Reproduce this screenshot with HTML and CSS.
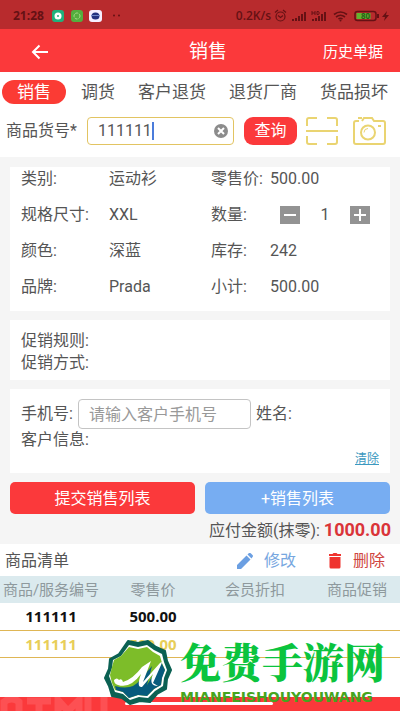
FILE: index.html
```html
<!DOCTYPE html>
<html lang="zh-CN">

<head>
  <title>销售</title>
  <meta charset="utf-8" />
  <meta name="viewport" content="width=device-width, initial-scale=1" />
  <link rel="stylesheet" href="styles.css">
</head>

<body>
<div class="status">
  <span class="clock">21:28</span>
  <svg class="apps" width="72" height="14" viewBox="0 0 72 14">
    <rect x="0" y="1" width="12" height="12" rx="3" fill="#20b17c"/>
    <circle cx="6" cy="7" r="3.5" fill="#fff"/><circle cx="6" cy="7" r="1" fill="#20b17c"/>
    <rect x="19" y="1" width="12" height="12" rx="3" fill="#54ae3e"/>
    <circle cx="25" cy="7" r="3" fill="none" stroke="#a9dc8c" stroke-dasharray="3 1"/>
    <rect x="37" y="1" width="13" height="12" rx="3" fill="#f5efff"/>
    <ellipse cx="43.500" cy="7" rx="4" ry="3.500" fill="#24317f"/><path d="M39 6.500h9" stroke="#7184c5"/>
    <circle cx="62" cy="6.500" r="1" fill="#651114"/><circle cx="67" cy="6.500" r="1" fill="#651114"/>
  </svg>
  <span class="speed">0.2K/s</span>
  <svg width="116" height="16" viewBox="0 0 116 16" fill="none" stroke="#651114">
    <circle cx="6.500" cy="8.500" r="4.500" stroke-width="1.200"/>
    <path d="M4 7.500l2.500 2 2.500-2M1 4.500l3-2.500M12 4.500L9 2" stroke-width="1.200"/>
    <path d="M19 13v-2M22 13v-3M25 13V8M28 13V6M31 13V4" stroke-width="2"/>
    <path d="M39 13v-2M42 13v-3M45 13V8M48 13V6M51 13V4" stroke-width="2"/>
    <path d="M38 3v4M41 3v4M38 5h3M43 3.500v3h1.500q1.500-1.500 0-3z" stroke-width="1"/>
    <path d="M60 6.500q6.500-5 13 0M62 9q4.500-3.500 9 0M64.500 11q2-1.500 4 0" stroke-width="1.600"/>
    <circle cx="66.500" cy="12.500" r="1" fill="#651114" stroke="none"/>
    <rect x="81" y="3.500" width="21" height="9" rx="2.500" stroke-width="1.500"/>
    <rect x="82.500" y="5" width="14" height="6" fill="#62b52f" stroke="none"/>
    <path d="M104 6v4" stroke-width="2"/>
    <path d="M113 3l-5 6h3l-1 4 5-6h-3z" fill="#651114" stroke="none"/>
    <text x="87" y="11" class="battery">80</text>
  </svg>
</div>

<header class="header">
  <button type="button" class="back" aria-label="返回">
    <svg width="18" height="16" viewBox="0 0 18 16" fill="none" stroke="#fff" stroke-width="2"><path d="M17 8H2M8.500 1.500L2 8l6.500 6.500"/></svg>
  </button>
  <h1>销售</h1>
  <a href="#history" class="history">历史单据</a>
</header>

<nav class="tabs">
  <a href="#sale" class="active">销售</a>
  <a href="#transfer">调货</a>
  <a href="#return">客户退货</a>
  <a href="#vendor">退货厂商</a>
  <a href="#damage">货品损坏</a>
</nav>

<form class="search">
  <label for="goods_no">商品货号*</label>
  <div class="search-box">
    <input type="text" id="goods_no" value="111111" />
    <span class="caret"></span>
    <button type="reset" class="clear-input" aria-label="清空">
      <svg width="14" height="14" viewBox="0 0 14 14"><circle cx="7" cy="7" r="7" fill="#8c8c8c"/><path d="M4 4l6 6M10 4l-6 6" stroke="#fff" stroke-width="2"/></svg>
    </button>
  </div>
  <button type="button" class="query">查询</button>
  <button type="button" class="icon" aria-label="扫码">
    <svg width="32" height="28" viewBox="0 0 32 28" fill="none" stroke="#ead471" stroke-width="2"><path d="M1 9V3q0-2 2-2h8M21 1h8q2 0 2 2v6M1 19v6q0 2 2 2h8M21 27h8q2 0 2-2v-6M0 14h32"/></svg>
  </button>
  <button type="button" class="icon" aria-label="拍照">
    <svg width="34" height="28" viewBox="0 0 34 28" fill="none" stroke="#ead471" stroke-width="2"><path d="M6 4H3Q1 4 1 6v19q0 2 2 2h27q2 0 2-2V6q0-2-2-2h-9l-2-3h-8L9 4M5 1h4M25 9h3"/><circle cx="15" cy="15.500" r="7"/><path d="M11 15.500q0-4 4-4" stroke-width="1"/></svg>
  </button>
</form>

<main class="content">
  <section class="card goods">
    <span>类别:</span><span>运动衫</span><span>零售价:</span><span>500.00</span>
    <span>规格尺寸:</span><span>XXL</span><span>数量:</span>
    <span class="stepper">
      <button type="button" aria-label="减少"><svg width="20" height="18" viewBox="0 0 20 18"><path d="M4 9h12" stroke="#fff" stroke-width="2"/></svg></button>
      <output>1</output>
      <button type="button" aria-label="增加"><svg width="20" height="18" viewBox="0 0 20 18"><path d="M4 9h12M10 3v12" stroke="#fff" stroke-width="2"/></svg></button>
    </span>
    <span>颜色:</span><span>深蓝</span><span>库存:</span><span>242</span>
    <span>品牌:</span><span>Prada</span><span>小计:</span><span>500.00</span>
  </section>

  <section class="card promo">
    <p>促销规则:</p>
    <p>促销方式:</p>
  </section>

  <section class="card customer">
    <div class="phone-row">
      <label for="phone">手机号:</label>
      <input type="text" id="phone" placeholder="请输入客户手机号" />
      <span>姓名:</span>
    </div>
    <p>客户信息:</p>
    <a href="#clear" class="clear">清除</a>
  </section>

  <div class="actions">
    <button type="button" class="submit">提交销售列表</button>
    <button type="button" class="add">+销售列表</button>
  </div>
  <p class="total">应付金额(抹零): <b>1000.00</b></p>
</main>

<div class="list-head">
  <h2>商品清单</h2>
  <button type="button" class="edit">
    <svg width="16" height="16" viewBox="0 0 16 16" fill="#6b9fe2"><path d="M0 16v-4L9.500 2.500l4 4L4 16zM10.500 1.500L12 0q1-.5 2 .5L15.500 2q1 1 0 2L14.500 5.500z"/></svg>
    修改
  </button>
  <button type="button" class="delete">
    <svg width="14" height="16" viewBox="0 0 14 16" fill="#ef342f"><path d="M1 1h3.500l1-1h3l1 1H13v2H1zM1.500 4h11v10q0 1.500-1.500 1.500H3Q1.500 15.500 1.500 14z"/></svg>
    删除
  </button>
</div>

<div class="list">
  <table>
    <thead>
      <tr><th>商品/服务编号</th><th>零售价</th><th>会员折扣</th><th>商品促销</th></tr>
    </thead>
    <tbody>
      <tr><td>111111</td><td>500.00</td><td></td><td></td></tr>
      <tr class="selected"><td>111111</td><td>500.00</td><td></td><td></td></tr>
    </tbody>
  </table>
</div>

<footer class="bottom">
  <svg class="pattern" width="125" height="14" viewBox="0 0 125 14" fill="none" stroke="#fd5053" stroke-width="7"><path d="M4 14V5q8-6 15 0v9M27 4h24M39 4v10M58 14V3l10 11L79 3v11M88 0v14M104 0v14"/></svg>
  <span class="home"></span>
</footer>

<div class="brand">
  <svg width="68" height="66" viewBox="0 0 68 66">
    <path d="M24 2l10 2 10-2 8 6 9 4 2 10 4 9-4 9-1 10-9 5-7 8-10-1-10 3-8-6-10-2-3-10-4-8 4-9 1-10 9-5z" fill="#0b6153" stroke="#0b6153" stroke-width="2" stroke-linejoin="round"/>
    <path d="M25 6l9 2 9-2 7 5 8 4 2 8 3 8-3 8-1 8-8 5-7 7-9-1-9 3-7-6-8-2-3-8-3-8 3-8 1-8 8-4z" fill="#fff"/>
    <path d="M25 8l9 2 9-2 6 5 7 4 2 7 3 7-3 7-1 8-7 4-7 7-9-1-9 3-6-6-8-2-3-7-2-8 2-8 2-7 7-4z" fill="#7dbd29"/>
    <path d="M11 47q17 5 25-6l12-14-5 19 14-23 4 8-3 8-1 7-7 4-7 7-9-1-9 3-6-6-7-2z" fill="#075b7d"/>
    <path d="M10 41q3-3 5 0 3-2 4 2 10-3 19-15l9-6-8 21 17-19q3-3 1 2l-8 18 5 3q-10 0-5-12L38 48q-6 1-1-13-11 15-23 11-4-1-4-5z" fill="#fff"/>
  </svg>
  <div class="brand-text">
    <strong>免费手游网</strong>
    <small>MIANFEISHOUYOUWANG</small>
  </div>
</div>

</body>
</html>
```

FILE: styles.css
```css
* { box-sizing: border-box; }

body {
  display: flex;
  flex-direction: column;
  min-height: 100vh;
  margin: 0;
  position: relative;
  background: #fff;
  color: #555;
  font: 16px/22px Roboto, "Noto Sans CJK SC", sans-serif;
}
h1, h2, p { margin: 0; font-weight: normal; }
button, input { font: inherit; color: inherit; margin: 0; padding: 0; border: 0; background: none; }
a { color: inherit; text-decoration: none; }
svg { display: block; flex: none; }

.status {
  display: flex;
  align-items: center;
  height: 29px;
  padding: 2px 10px 0 13px;
  background: #b82b2d;
  color: #651114;
  font: bold 12px/16px "Open Sans", sans-serif;
}
.apps { margin-left: 8px; }
.speed { margin-left: auto; margin-right: 3px; font-weight: 600; }
.battery { fill: #285d18; stroke: none; font: bold 8px "Open Sans", sans-serif; }

.header {
  display: grid;
  grid-template-columns: 1fr auto 1fr;
  align-items: center;
  height: 43px;
  padding: 2px 17px 0 31px;
  background: #fb393b;
  color: #fff;
}
.header h1 { font-size: 19px; padding-left: 2px; }
.back { justify-self: start; }
.history { justify-self: end; font-size: 15px; }

.tabs {
  display: flex;
  justify-content: space-between;
  align-items: center;
  padding: 8px 12px 0 2px;
  font-size: 17px;
  line-height: 24px;
}
.tabs .active { margin-right: -8px; padding: 0 15px; border-radius: 12px; background: #fb3b34; color: #fff; }

.search { display: flex; align-items: center; padding: 13px 13px 12px 6px; }
.search-box {
  display: flex;
  flex: 1;
  align-items: center;
  height: 28px;
  margin: 0 10px;
  padding: 0 5px 0 10px;
  border: 1px solid #e2c462;
  border-radius: 4px;
}
.search-box input { width: 54px; height: 22px; outline: 0; }
.caret { width: 2px; height: 18px; background: #4b7cdb; }
.clear-input { margin-left: auto; }
.query { width: 53px; height: 28px; border-radius: 9px; background: #fb393b; color: #fff; }
.icon { margin-left: 9px; }
.icon + .icon { margin-left: 15px; }

.content { padding: 10px 10px 0; background: #f5f5f5; }
.card { margin-bottom: 9px; background: #fff; }
.goods {
  display: grid;
  grid-template-columns: 88px 102px 59px 1fr;
  row-gap: 14px;
  padding: 1px 11px 13px;
}
.goods > span { white-space: nowrap; }
.stepper { display: flex; align-items: center; justify-content: space-between; padding: 0 9px 0 10px; }
.stepper button { background: #939393; }
.promo { padding: 10px 11px 6px; }
.customer { padding: 10px 11px 5px; }
.phone-row { display: flex; align-items: center; gap: 5px; white-space: nowrap; }
.phone-row input {
  width: 173px;
  height: 30px;
  padding: 0 10px;
  border: 1px solid #c4c4c4;
  border-radius: 4px;
}
.phone-row input::placeholder { color: #999; }
.clear {
  display: block;
  width: max-content;
  margin-left: auto;
  color: #3c99c0;
  font-size: 12px;
  line-height: 17px;
  text-decoration: underline;
}

.actions { display: flex; gap: 10px; }
.actions button { flex: 1; height: 32px; padding-top: 2px; border-radius: 5px; color: #fff; }
.actions .submit { background: #fb393b; }
.actions .add { background: #77adf2; }
.total { padding: 5px 0 2px; text-align: right; margin-right: -1px; }
.total b { color: #da3439; font-size: 18px; }

.list-head { display: flex; align-items: center; height: 32px; padding: 2px 15px 0 5px; }
.list-head h2 { margin-right: auto; font-size: 16px; }
.list-head button { display: flex; align-items: center; gap: 11px; }
.list-head .edit { color: #77a7df; }
.list-head .delete { margin-left: 32px; color: #cf4540; }

.list { overflow: hidden; }
.list table { width: 102%; border-collapse: collapse; table-layout: fixed; }
.list th { height: 27px; padding: 0; background: #dbeaee; color: #8e999d; font-size: 15px; font-weight: normal; white-space: nowrap; }
.list td {
  height: 27px;
  padding: 0;
  border-bottom: 1px solid #dfb655;
  color: #111;
  font: bold 15px/20px "Open Sans", sans-serif;
  text-align: center;
}
.list .selected td { color: #e8ce58; }

.bottom { display: flex; align-items: flex-start; height: 14px; margin-top: auto; background: #fb393b; }
.home { width: 148px; height: 3px; margin-top: 5px; border-radius: 2px; background: #fff; }

/* site mark floats over the end of the list */
.brand { position: absolute; left: 104px; bottom: 5px; display: flex; align-items: center; gap: 8px; color: #0bc43e; }
.brand-text { display: flex; flex-direction: column; gap: 4px; }
.brand strong { font: 900 41px/46px "Noto Serif CJK SC", "Noto Sans CJK SC", serif; white-space: nowrap; }
.brand small { font: bold 14px/18px "DejaVu Sans", sans-serif; color: #46a51e; }
```
